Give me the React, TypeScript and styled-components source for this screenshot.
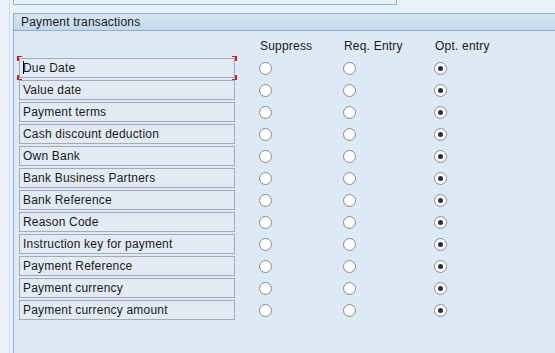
import React from 'react'
import styled, { createGlobalStyle } from 'styled-components'

const GlobalStyle = createGlobalStyle`
  html, body {
    margin: 0;
    padding: 0;
    height: 100%;
    background: #e9f0f8;
    font-family: 'Liberation Sans', Arial, sans-serif;
    font-size: 12px;
    letter-spacing: 0.2px;
    color: #1a1a1a;
  }
  #root {
    height: 100%;
  }
`

const Page = styled.div`
  display: flex;
  height: 100vh;
  overflow: hidden;
`

const Gutter = styled.div`
  width: 9px;
  border-right: 1px solid #d3dbe4;
  margin-right: 3px;
  flex-shrink: 0;
`

const Main = styled.div`
  flex: 1;
  display: flex;
  flex-direction: column;
  min-width: 0;
`

const PrevBox = styled.div`
  width: 382px;
  height: 4px;
  border: 1px solid #8fb1d2;
  border-top: none;
  background: #e8f0f8;
  margin-bottom: 8px;
`

const Group = styled.section`
  flex: 1;
  display: flex;
  flex-direction: column;
  border-top: 1px solid #93b0cd;
  border-left: 1px solid #93b0cd;
  background: #dde9f4;
`

const GroupHeader = styled.div`
  height: 16px;
  line-height: 16px;
  padding-left: 7px;
  background: linear-gradient(#d9e6f3, #c2d8ec);
  border-bottom: 1px solid #8eaed0;
  color: #1a1a1a;
`

const Body = styled.div`
  display: grid;
  grid-template-columns: 240px 84px 91px 1fr;
  padding: 8px 0 0 5px;
  align-items: center;
`

const ColHead = styled.div`
  height: 15px;
  line-height: 15px;
  margin-bottom: 3px;
  margin-left: 1px;
`

const LabelBox = styled.div`
  position: relative;
  box-sizing: border-box;
  height: 20px;
  line-height: 18px;
  margin: 1px 24px 1px 0;
  padding-left: 3px;
  border: 1px solid #a3abb3;
  background: #e2ebf4;
  white-space: nowrap;
`

const Caret = styled.span`
  display: inline-block;
  width: 1px;
  height: 13px;
  background: #000;
  vertical-align: -2px;
  margin-right: -1px;
`

const Corner = styled.span<{ $v: 'top' | 'bottom'; $h: 'left' | 'right' }>`
  position: absolute;
  width: 3px;
  height: 4px;
  ${(p) => p.$v}: -3px;
  ${(p) => p.$h}: -3px;
  border-${(p) => p.$v}: 1px solid #e0141e;
  border-${(p) => p.$h}: 2px solid #e0141e;
`

const RadioCell = styled.div`
  height: 22px;
  display: flex;
  align-items: center;
`

const Radio = styled.span<{ $checked?: boolean }>`
  box-sizing: border-box;
  width: 13px;
  height: 13px;
  border-radius: 50%;
  border: 1px solid #8c8c8c;
  background: radial-gradient(circle at 50% 40%, #ffffff 55%, #f0f0f0);
  display: flex;
  align-items: center;
  justify-content: center;

  &::after {
    content: '';
    display: ${(p) => (p.$checked ? 'block' : 'none')};
    width: 5px;
    height: 5px;
    border-radius: 50%;
    background: #2b2d45;
  }
`

const fields = [
  'Due Date',
  'Value date',
  'Payment terms',
  'Cash discount deduction',
  'Own Bank',
  'Bank Business Partners',
  'Bank Reference',
  'Reason Code',
  'Instruction key for payment',
  'Payment Reference',
  'Payment currency',
  'Payment currency amount',
]

export default function App() {
  return (
    <>
      <GlobalStyle />
      <Page>
        <Gutter />
        <Main>
          <PrevBox />
          <Group>
            <GroupHeader>Payment transactions</GroupHeader>
            <Body>
              <div />
              <ColHead>Suppress</ColHead>
              <ColHead>Req. Entry</ColHead>
              <ColHead>Opt. entry</ColHead>
              {fields.map((f, i) => (
                <React.Fragment key={f}>
                  <LabelBox>
                    {i === 0 && (
                      <>
                        <Caret />
                        <Corner $v="top" $h="left" />
                        <Corner $v="top" $h="right" />
                        <Corner $v="bottom" $h="left" />
                        <Corner $v="bottom" $h="right" />
                      </>
                    )}
                    {f}
                  </LabelBox>
                  <RadioCell>
                    <Radio />
                  </RadioCell>
                  <RadioCell>
                    <Radio />
                  </RadioCell>
                  <RadioCell>
                    <Radio $checked />
                  </RadioCell>
                </React.Fragment>
              ))}
            </Body>
          </Group>
        </Main>
      </Page>
    </>
  )
}
